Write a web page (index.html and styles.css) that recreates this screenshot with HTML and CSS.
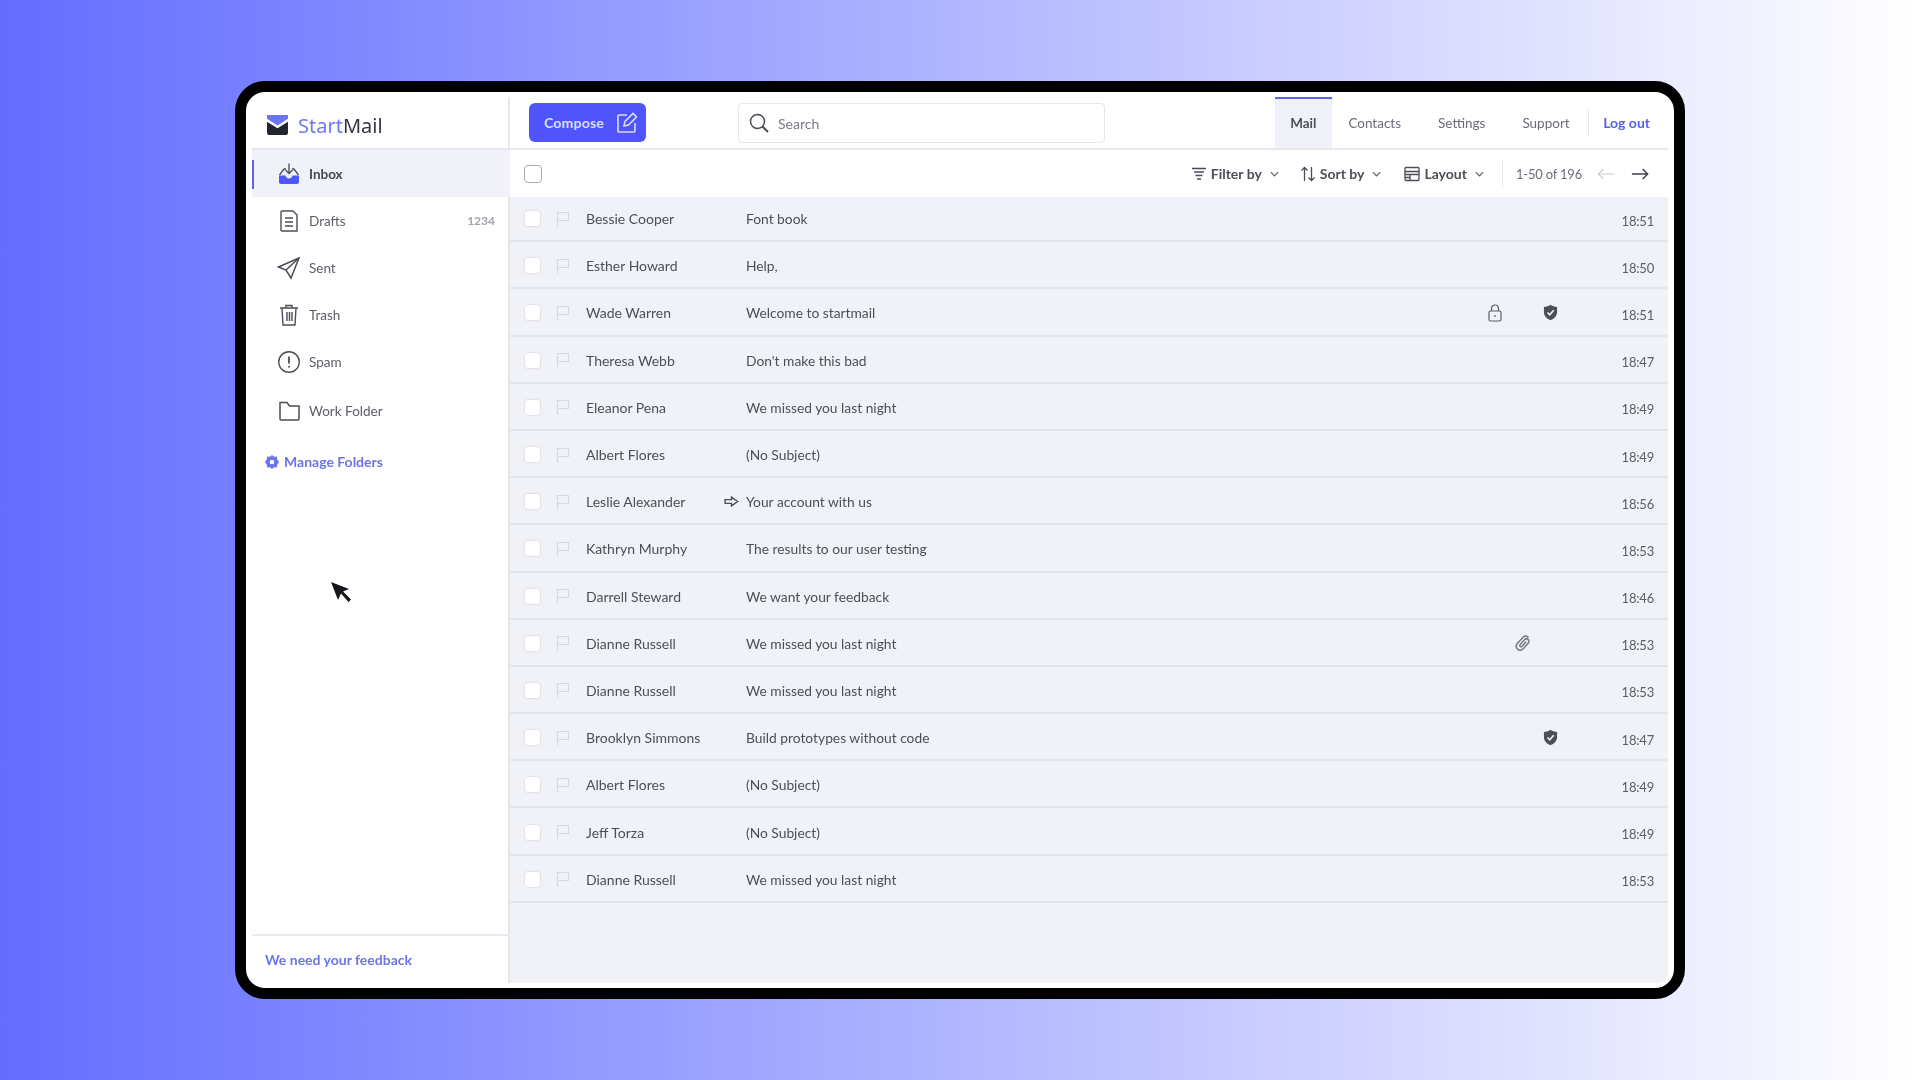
FILE: index.html
```html
<!DOCTYPE html>
<html lang="en">
<head>
    <meta charset="UTF-8">
    <title>StartMail</title>
    <link rel="stylesheet" href="styles.css">
</head>
<body>
    <svg class="icon-sprite" width="0" height="0">
        <symbol id="i-flag" viewBox="0 0 14 16"><path d="M1.500 15.500V1.500H12.500V9.500H1.500" fill="none" stroke="currentColor" stroke-width="1.200"/></symbol>
        <symbol id="i-shield" viewBox="0 0 16 18"><path d="M8 .8C10 2.200 12.500 3 15 3.200V8.500C15 12.800 12 15.800 8 17.200C4 15.800 1 12.800 1 8.500V3.200C3.500 3 6 2.200 8 .8Z" fill="currentColor"/><path d="M4.800 9L7.200 11.400L11.400 6.600" fill="none" stroke="#f1f2f8" stroke-width="1.800"/></symbol>
    </svg>

    <div class="device">
        <div class="screen">
            <aside class="sidebar">
                <div class="logo">
                    <svg class="logo-icon" viewBox="0 0 22 21"><path d="M0 0H22V4L11 11L0 4Z" fill="#6b74f2"/><path d="M0 7L11 14L22 7V19A2 2 0 0 1 20 21H2A2 2 0 0 1 0 19Z" fill="#22252e"/></svg>
                    <span class="logo-text"><span class="logo-start">Start</span>Mail</span>
                </div>
                <nav class="folders">
                    <a class="folder active">
                        <svg class="folder-icon" viewBox="0 0 24 24"><path d="M2.500 13L7 7H9M21.500 13L17 7H15" fill="none" stroke="#4a4d57" stroke-width="1.300"/><path d="M12 1.500V11M8.500 8L12 11.500L15.500 8" fill="none" stroke="#4a4d57" stroke-width="1.300"/><path d="M2 13.500H8.500C9 15.500 10.200 16.500 12 16.500C13.800 16.500 15 15.500 15.500 13.500H22V20A2 2 0 0 1 20 22H4A2 2 0 0 1 2 20Z" fill="#4f55fb"/></svg>
                        Inbox
                    </a>
                    <a class="folder">
                        <svg class="folder-icon" viewBox="0 0 24 24" fill="none" stroke="#4a4d57" stroke-width="1.400"><path d="M5 2H16L20 6V22H5Q4 22 4 21V3Q4 2 5 2Z"/><path d="M8 9H16M8 13H16M8 17H16"/></svg>
                        Drafts
                        <span class="folder-count">1234</span>
                    </a>
                    <a class="folder">
                        <svg class="folder-icon" viewBox="0 0 24 24" fill="none" stroke="#4a4d57" stroke-width="1.500"><path d="M22 2L1.500 11L9 14L14 22Z"/><path d="M22 2L9 14"/></svg>
                        Sent
                    </a>
                    <a class="folder">
                        <svg class="folder-icon" viewBox="0 0 24 24" fill="none" stroke="#4a4d57" stroke-width="1.400"><path d="M3 5H21M9 5V2.500H15V5M5 5L6 22H18L19 5"/><path d="M10 9V18M12.500 9V18M15 9V18"/></svg>
                        Trash
                    </a>
                    <a class="folder">
                        <svg class="folder-icon" viewBox="0 0 24 24" fill="none" stroke="#4a4d57" stroke-width="1.400"><circle cx="12" cy="12" r="10.300"/><path d="M12 6.500V13.500M12 16V17.500" stroke-width="1.800"/></svg>
                        Spam
                    </a>
                    <a class="folder work-folder">
                        <svg class="folder-icon" viewBox="0 0 24 24" fill="none" stroke="#4a4d57" stroke-width="1.500"><path d="M3 3.500H10L12.500 7H22V20Q22 21 21 21H4Q3 21 3 20Z"/></svg>
                        Work Folder
                    </a>
                </nav>
                <a class="manage-folders">
                    <svg class="gear-icon" viewBox="0 0 14 14"><path d="M7 0L9 1.800L11.800 1.400L12.200 4.200L14 7L12.200 9.800L11.800 12.600L9 12.200L7 14L5 12.200L2.200 12.600L1.800 9.800L0 7L1.800 4.200L2.200 1.400L5 1.800ZM7 4.700A2.300 2.300 0 1 0 7 9.300A2.300 2.300 0 1 0 7 4.700Z" fill="#6b74e8" fill-rule="evenodd"/></svg>
                    Manage Folders
                </a>
                <svg class="cursor" viewBox="0 0 22 22"><path d="M1 1L8 19L11 12.500L18.500 21L21 18.500L13 10.500L19 8Z" fill="#15161a"/></svg>
                <div class="sidebar-footer"><a class="feedback">We need your feedback</a></div>
            </aside>

            <main class="main">
                <header class="topbar">
                    <button class="compose">
                        Compose
                        <svg class="compose-icon" viewBox="0 0 22 22" fill="none" stroke="#d8dcff" stroke-width="1.600"><path d="M11 3H3Q2 3 2 4V19Q2 20 3 20H18Q19 20 19 19V11"/><path d="M8 14L9 9.500L17 1.500L20.500 5L12.500 13Z"/></svg>
                    </button>
                    <div class="search">
                        <svg class="search-icon" viewBox="0 0 20 20" fill="none" stroke="#4a4d57" stroke-width="1.500"><circle cx="8.500" cy="8.500" r="7"/><path d="M13.500 13.500L19 19" stroke-width="2"/></svg>
                        <span>Search</span>
                    </div>
                    <nav class="tabs">
                        <a class="tab active">Mail</a>
                        <a class="tab">Contacts</a>
                        <a class="tab">Settings</a>
                        <a class="tab">Support</a>
                        <a class="logout">Log out</a>
                    </nav>
                </header>

                <div class="toolbar">
                    <span class="checkbox select-all"></span>
                    <div class="toolbar-actions">
                        <a class="tool tool-filter">
                            <svg class="tool-icon" viewBox="0 0 16 16" fill="none" stroke="#4a4d57" stroke-width="1.300"><path d="M1 2.500H15M3 6H13M4.500 9.500H11.500M6 13H10"/></svg>
                            Filter by
                            <svg class="chevron" viewBox="0 0 10 6"><path d="M1 1L5 5L9 1" fill="none" stroke="#5b5e67" stroke-width="1.300"/></svg>
                        </a>
                        <a class="tool tool-sort">
                            <svg class="tool-icon" viewBox="0 0 16 16" fill="none" stroke="#4a4d57" stroke-width="1.300"><path d="M4.500 15V1.500M1.500 4.500L4.500 1.500L7.500 4.500M11.500 1V14.500M8.500 11.500L11.500 14.500L14.500 11.500"/></svg>
                            Sort by
                            <svg class="chevron" viewBox="0 0 10 6"><path d="M1 1L5 5L9 1" fill="none" stroke="#5b5e67" stroke-width="1.300"/></svg>
                        </a>
                        <a class="tool tool-layout">
                            <svg class="tool-icon" viewBox="0 0 16 16" fill="none" stroke="#4a4d57" stroke-width="1.300"><rect x="1" y="1.500" width="14" height="13" rx="1"/><path d="M1 5.500H15M1 8.500H15M6 8.500V14.500M1 11.500H6"/></svg>
                            Layout
                            <svg class="chevron" viewBox="0 0 10 6"><path d="M1 1L5 5L9 1" fill="none" stroke="#5b5e67" stroke-width="1.300"/></svg>
                        </a>
                        <span class="pager-count">1-50 of 196</span>
                        <svg class="pager-arrow prev" viewBox="0 0 20 14" fill="none" stroke="#c9cbd2" stroke-width="1.300"><path d="M19 7H1.500M7 1.500L1.500 7L7 12.500"/></svg>
                        <svg class="pager-arrow" viewBox="0 0 20 14" fill="none" stroke="#3c3f48" stroke-width="1.600"><path d="M1 7H18.500M13 1.500L18.500 7L13 12.500"/></svg>
                    </div>
                </div>

                <div class="mail-list">
                    <div class="mail-row">
                        <span class="checkbox"></span><svg class="flag"><use href="#i-flag"/></svg>
                        <span class="sender">Bessie Cooper</span><span class="mark"></span><span class="subject">Font book</span>
                        <span class="cell"></span><span class="cell"></span><span class="cell"></span><span class="time">18:51</span>
                    </div>
                    <div class="mail-row">
                        <span class="checkbox"></span><svg class="flag"><use href="#i-flag"/></svg>
                        <span class="sender">Esther Howard</span><span class="mark"></span><span class="subject">Help,</span>
                        <span class="cell"></span><span class="cell"></span><span class="cell"></span><span class="time">18:50</span>
                    </div>
                    <div class="mail-row">
                        <span class="checkbox"></span><svg class="flag"><use href="#i-flag"/></svg>
                        <span class="sender">Wade Warren</span><span class="mark"></span><span class="subject">Welcome to startmail</span>
                        <span class="cell"><svg class="lock" viewBox="0 0 14 18" fill="none" stroke="#5b5e67" stroke-width="1.200"><rect x="1" y="7" width="12" height="10" rx="1.500"/><path d="M3.500 7V4.500A3.500 3.500 0 0 1 10.500 4.500V7M7 11V13"/></svg></span><span class="cell"></span><span class="cell"><svg class="shield"><use href="#i-shield"/></svg></span><span class="time">18:51</span>
                    </div>
                    <div class="mail-row">
                        <span class="checkbox"></span><svg class="flag"><use href="#i-flag"/></svg>
                        <span class="sender">Theresa Webb</span><span class="mark"></span><span class="subject">Don't make this bad</span>
                        <span class="cell"></span><span class="cell"></span><span class="cell"></span><span class="time">18:47</span>
                    </div>
                    <div class="mail-row">
                        <span class="checkbox"></span><svg class="flag"><use href="#i-flag"/></svg>
                        <span class="sender">Eleanor Pena</span><span class="mark"></span><span class="subject">We missed you last night</span>
                        <span class="cell"></span><span class="cell"></span><span class="cell"></span><span class="time">18:49</span>
                    </div>
                    <div class="mail-row">
                        <span class="checkbox"></span><svg class="flag"><use href="#i-flag"/></svg>
                        <span class="sender">Albert Flores</span><span class="mark"></span><span class="subject">(No Subject)</span>
                        <span class="cell"></span><span class="cell"></span><span class="cell"></span><span class="time">18:49</span>
                    </div>
                    <div class="mail-row">
                        <span class="checkbox"></span><svg class="flag"><use href="#i-flag"/></svg>
                        <span class="sender">Leslie Alexander</span><span class="mark"><svg class="forward" viewBox="0 0 16 12" fill="none" stroke="#4a4d57" stroke-width="1.500"><path d="M1 4H8V1.200L14.800 6L8 10.800V8H1Z"/></svg></span><span class="subject">Your account with us</span>
                        <span class="cell"></span><span class="cell"></span><span class="cell"></span><span class="time">18:56</span>
                    </div>
                    <div class="mail-row">
                        <span class="checkbox"></span><svg class="flag"><use href="#i-flag"/></svg>
                        <span class="sender">Kathryn Murphy</span><span class="mark"></span><span class="subject">The results to our user testing</span>
                        <span class="cell"></span><span class="cell"></span><span class="cell"></span><span class="time">18:53</span>
                    </div>
                    <div class="mail-row">
                        <span class="checkbox"></span><svg class="flag"><use href="#i-flag"/></svg>
                        <span class="sender">Darrell Steward</span><span class="mark"></span><span class="subject">We want your feedback</span>
                        <span class="cell"></span><span class="cell"></span><span class="cell"></span><span class="time">18:46</span>
                    </div>
                    <div class="mail-row">
                        <span class="checkbox"></span><svg class="flag"><use href="#i-flag"/></svg>
                        <span class="sender">Dianne Russell</span><span class="mark"></span><span class="subject">We missed you last night</span>
                        <span class="cell"></span><span class="cell"><svg class="clip" viewBox="0 0 16 18" fill="none" stroke="#75787f" stroke-width="1.500"><path d="M13.500 3.500C12 1.500 9.800 1.500 8.300 3L2.500 9.300C.8 11.200 1 13.700 2.600 15.200C4.200 16.700 6.500 16.500 8 14.900L13.200 9.200C14.300 8 14.200 6.400 13.100 5.400C12 4.400 10.500 4.600 9.500 5.700L5.200 10.500C4.600 11.200 4.700 12 5.300 12.500C5.900 13 6.600 12.900 7.200 12.300L11.200 7.800"/></svg></span><span class="cell"></span><span class="time">18:53</span>
                    </div>
                    <div class="mail-row">
                        <span class="checkbox"></span><svg class="flag"><use href="#i-flag"/></svg>
                        <span class="sender">Dianne Russell</span><span class="mark"></span><span class="subject">We missed you last night</span>
                        <span class="cell"></span><span class="cell"></span><span class="cell"></span><span class="time">18:53</span>
                    </div>
                    <div class="mail-row">
                        <span class="checkbox"></span><svg class="flag"><use href="#i-flag"/></svg>
                        <span class="sender">Brooklyn Simmons</span><span class="mark"></span><span class="subject">Build prototypes without code</span>
                        <span class="cell"></span><span class="cell"></span><span class="cell"><svg class="shield"><use href="#i-shield"/></svg></span><span class="time">18:47</span>
                    </div>
                    <div class="mail-row">
                        <span class="checkbox"></span><svg class="flag"><use href="#i-flag"/></svg>
                        <span class="sender">Albert Flores</span><span class="mark"></span><span class="subject">(No Subject)</span>
                        <span class="cell"></span><span class="cell"></span><span class="cell"></span><span class="time">18:49</span>
                    </div>
                    <div class="mail-row">
                        <span class="checkbox"></span><svg class="flag"><use href="#i-flag"/></svg>
                        <span class="sender">Jeff Torza</span><span class="mark"></span><span class="subject">(No Subject)</span>
                        <span class="cell"></span><span class="cell"></span><span class="cell"></span><span class="time">18:49</span>
                    </div>
                    <div class="mail-row">
                        <span class="checkbox"></span><svg class="flag"><use href="#i-flag"/></svg>
                        <span class="sender">Dianne Russell</span><span class="mark"></span><span class="subject">We missed you last night</span>
                        <span class="cell"></span><span class="cell"></span><span class="cell"></span><span class="time">18:53</span>
                    </div>
                </div>
            </main>
        </div>
    </div>
</body>
</html>
```

FILE: styles.css
```css
* {
    margin: 0;
    padding: 0;
    box-sizing: border-box;
}

body {
    width: 1920px;
    height: 1080px;
    overflow: hidden;
    display: flex;
    justify-content: center;
    align-items: center;
    background: linear-gradient(90deg, #636dff 0%, #ffffff 100%);
    font-family: Lato, 'Noto Sans', sans-serif;
    font-size: 14px;
    color: #4c4f57;
}

.icon-sprite {
    position: absolute;
}

/* device frame */
.device {
    width: 1450px;
    height: 918px;
    padding: 5px 6px;
    border: 11px solid #000;
    border-radius: 30px;
    background: #fff;
}

.screen {
    display: flex;
    height: 100%;
    filter: blur(0.5px);
}

/* sidebar */
.sidebar {
    position: relative;
    display: flex;
    flex-direction: column;
    flex: 0 0 258px;
    border-right: 2px solid #e6e7ec;
}

.logo {
    display: flex;
    align-items: center;
    height: 53px;
    padding-left: 15px;
    padding-top: 5px;
    border-bottom: 2px solid #e6e7ec;
    margin-right: -2px;
}

.logo-icon {
    width: 21px;
    height: 20px;
}

.logo-text {
    margin-left: 10px;
    font-family: 'Noto Sans', sans-serif;
    font-size: 20px;
    color: #33363f;
}

.logo-start {
    color: #6f78ee;
}

.folders {
    display: flex;
    flex-direction: column;
}

.folder {
    position: relative;
    display: flex;
    align-items: center;
    gap: 8px;
    height: 47.2px;
    padding: 0 13px 0 25px;
    font-size: 13.5px;
    color: #5b5e67;
}

.folder.active {
    margin-right: -2px;
    background: #f1f2f9;
    font-weight: 700;
    color: #44474f;
}

.folder.active::before {
    content: "";
    position: absolute;
    left: 0;
    top: 10px;
    bottom: 8px;
    width: 2px;
    background: #5c63f0;
}

.work-folder {
    margin-top: 1px;
}

.folder-icon {
    width: 24px;
    height: 24px;
    flex-shrink: 0;
}

.folder-count {
    margin-left: auto;
    font-size: 12px;
    font-weight: 700;
    color: #a3a5ac;
}

.manage-folders {
    display: flex;
    align-items: center;
    gap: 5px;
    margin-top: 19px;
    padding-left: 13px;
    font-weight: 700;
    color: #6b74e8;
}

.gear-icon {
    width: 14px;
    height: 14px;
}

.cursor {
    position: absolute;
    left: 78px;
    top: 484px;
    width: 22px;
    height: 22px;
}

.sidebar-footer {
    margin-top: auto;
    height: 49px;
    padding: 15px 0 0 13px;
    border-top: 2px solid #e9eaee;
    margin-right: -2px;
}

.feedback {
    font-weight: 700;
    color: #6b74e8;
}

/* main column */
.main {
    display: flex;
    flex-direction: column;
    flex: 1;
    min-width: 0;
    border-bottom-right-radius: 10px;
    background: #f1f2f8;
}

.topbar {
    display: flex;
    align-items: stretch;
    height: 53px;
    padding-left: 19px;
    background: #fff;
    border-bottom: 2px solid #e6e7ec;
}

.compose {
    display: flex;
    align-items: center;
    justify-content: space-between;
    width: 117px;
    height: 39px;
    margin-top: 6px;
    padding: 0 8px 0 15px;
    border: none;
    border-radius: 6px;
    background: #4f55fb;
    font: 700 14px Lato, sans-serif;
    letter-spacing: 0.2px;
    color: #d8dcff;
}

.compose-icon {
    width: 22px;
    height: 22px;
}

.search {
    display: flex;
    align-items: center;
    gap: 9px;
    width: 367px;
    height: 40px;
    margin: 6px 0 0 92px;
    padding-left: 10px;
    border: 1px solid #e6e7ec;
    border-radius: 4px;
    color: #777a82;
}

.search-icon {
    width: 20px;
    height: 20px;
}

.tabs {
    display: flex;
    margin-left: auto;
    padding-right: 18px;
}

.tab {
    display: flex;
    align-items: center;
    padding: 0 18.5px 2px;
    border-top: 2px solid transparent;
    font-size: 13.5px;
    color: #6a6d75;
}

.tab.active {
    margin-right: -2px;
    padding: 0 15.5px 2px;
    border-top-color: #5c63f0;
    background: #f1f2f9;
    font-weight: 700;
    color: #4c4f57;
}

.logout {
    align-self: center;
    padding: 4px 0 4px 14px;
    border-left: 1px solid #e6e7ec;
    font-weight: 700;
    color: #5560e8;
}

/* toolbar above the list */
.toolbar {
    display: flex;
    align-items: center;
    justify-content: space-between;
    height: 47px;
    padding: 0 19px 0 14px;
    background: #fff;
}

.checkbox {
    display: block;
    width: 17px;
    height: 17px;
    border: 1px solid #e3e4ea;
    border-radius: 4px;
    background: #fff;
}

.select-all {
    width: 18px;
    height: 18px;
    border: 1.5px solid #a8aab0;
}

.toolbar-actions {
    display: flex;
    align-items: center;
}

.tool {
    display: flex;
    align-items: center;
    gap: 4px;
    font-weight: 700;
    font-size: 14px;
}

.tool-sort {
    margin-left: 21px;
}

.tool-layout {
    margin-left: 23px;
}

.tool-icon {
    width: 16px;
    height: 16px;
}

.chevron {
    width: 9px;
    height: 6px;
    margin-left: 4px;
}

.pager-count {
    margin-left: 18px;
    padding: 5px 0 5px 13px;
    border-left: 1px solid #e6e7ec;
    font-size: 13px;
    letter-spacing: -0.2px;
    color: #6a6d75;
}

.pager-arrow {
    width: 18px;
    height: 14px;
    margin-left: 16px;
}

.pager-arrow.prev {
    margin-left: 15px;
}

/* mail rows */
.mail-list {
    display: flex;
    flex-direction: column;
}

.mail-row {
    display: grid;
    grid-template-columns: 32px 30px 138px 22px 734px 30px 25px 30px 1fr;
    align-items: center;
    height: 47.2px;
    padding: 2px 14px 0;
    border-bottom: 2px solid #e4e5ea;
}

.mail-row:first-child {
    height: 45.2px;
    padding-top: 0;
}

.mail-row .checkbox {
    box-shadow: 0 0 2px rgba(0, 0, 0, 0.05);
}

.flag {
    width: 14px;
    height: 16px;
    color: #d8d9de;
}

.sender,
.subject {
    white-space: nowrap;
}

.subject {
    font-size: 13.8px;
}

.mark {
    display: flex;
}

.forward {
    width: 15px;
    height: 11px;
}

.cell {
    display: flex;
    justify-content: center;
}

.lock {
    width: 14px;
    height: 18px;
}

.clip {
    width: 16px;
    height: 18px;
}

.shield {
    width: 15px;
    height: 17px;
    color: #4c4f57;
}

.time {
    padding-top: 4px;
    text-align: right;
    font-size: 13px;
    letter-spacing: -0.2px;
    color: #5b5e67;
}
```
